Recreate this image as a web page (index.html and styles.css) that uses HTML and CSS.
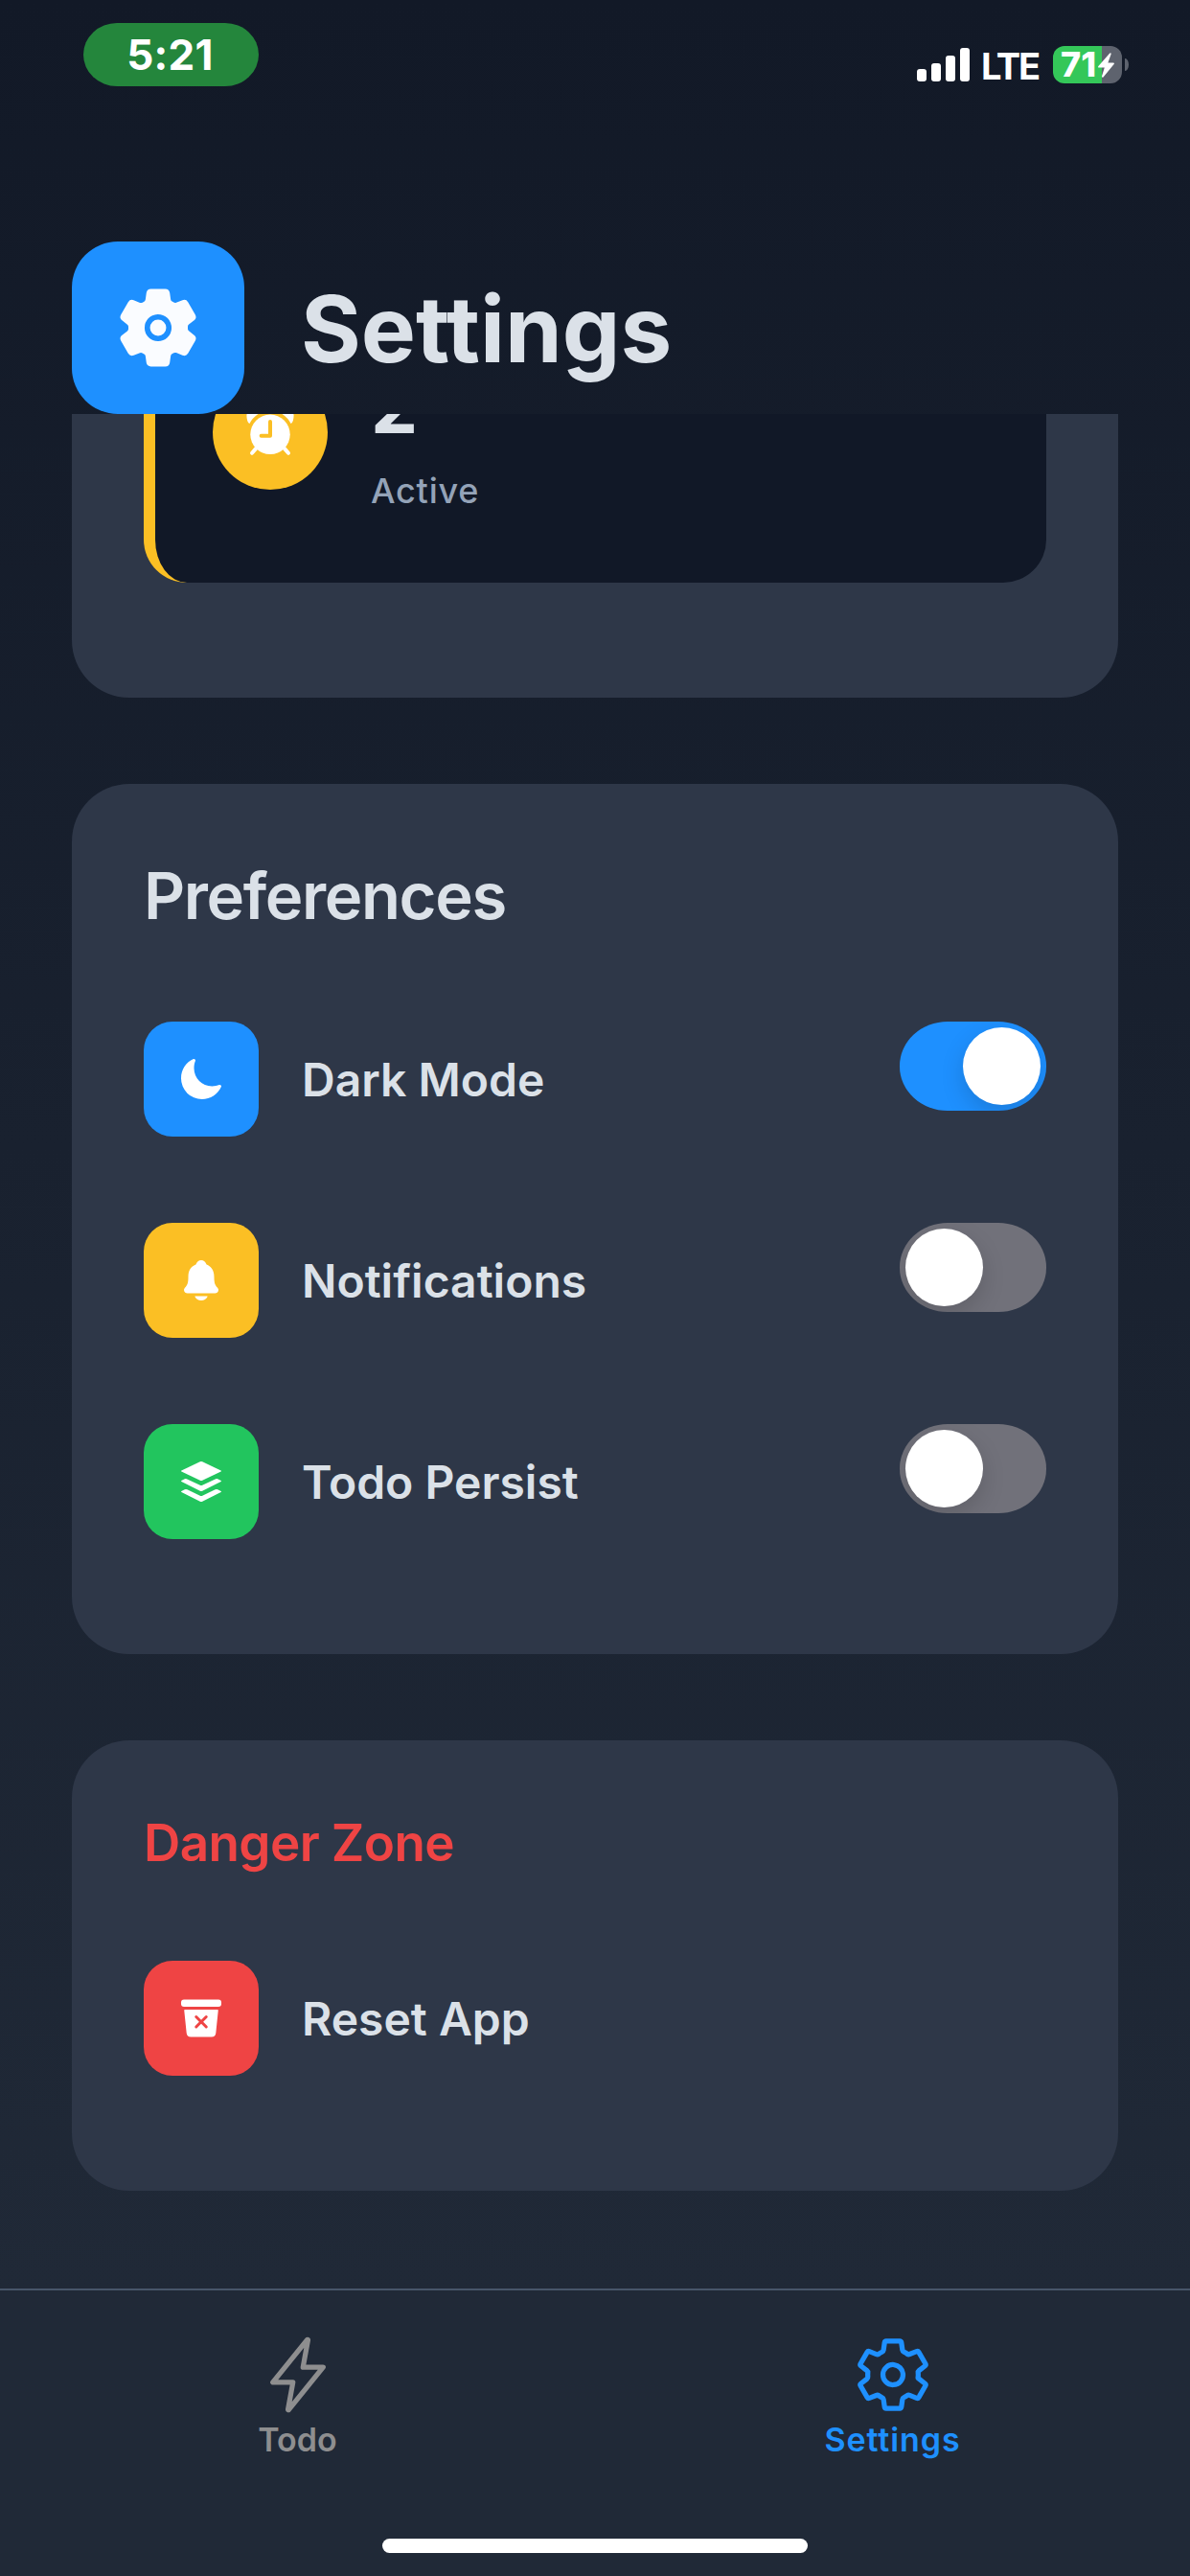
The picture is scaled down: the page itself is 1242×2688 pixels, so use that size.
FILE: index.html
```html
<!DOCTYPE html>
<html lang="en">
<head>
<meta charset="utf-8">
<title>Settings</title>
<link rel="stylesheet" href="styles.css">
</head>
<body>
<div class="screen">
  <div class="status-bar">
    <div class="time-pill">5:21</div>
    <div class="status-right">
      <svg class="signal" viewBox="0 0 55 35" fill="#fff"><rect x="0" y="22" width="10" height="13" rx="3"/><rect x="15" y="16" width="10" height="19" rx="3"/><rect x="30" y="8" width="10" height="27" rx="3"/><rect x="45" y="0" width="10" height="35" rx="3"/></svg>
      <span class="network">LTE</span>
      <div class="battery">
        <span class="level">71</span>
        <svg class="charge" viewBox="0 0 17 26" fill="#fff"><path d="M12.300.500.400 14q-1 1.500.800 1.500H6.800L4 24.500q0 1.800 1.500 1L16.600 12q1-1.500-.800-1.500H10.400L13.600 1.500Q13.800-.500 12.300.500z"/></svg>
      </div>
      <span class="battery-cap"></span>
    </div>
  </div>

  <header class="header">
    <div class="app-icon">
      <svg viewBox="0 0 512 512" fill="#fafcff"><circle cx="256" cy="256" r="48"/><path d="M470.39 300l-.47-.38-31.56-24.75a16.11 16.11 0 01-6.1-13.33v-11.56a16 16 0 016.11-13.22L469.92 212l.47-.38a26.68 26.68 0 005.9-34.06l-42.71-73.9a1.59 1.59 0 01-.13-.22A26.86 26.86 0 00401 92.14l-.35.13-37.1 14.93a15.94 15.94 0 01-14.47-1.29q-4.92-3.1-10-5.86a15.94 15.94 0 01-8.19-11.82l-5.59-39.59-.12-.72A27.22 27.22 0 00298.76 26h-85.52a26.92 26.92 0 00-26.45 22.39l-.09.56-5.57 39.67a16 16 0 01-8.13 11.82 175.21 175.21 0 00-10 5.82 15.92 15.92 0 01-14.43 1.27l-37.13-15-.35-.14a26.87 26.87 0 00-32.48 11.34l-.13.22-42.77 73.95a26.71 26.71 0 005.9 34.1l.47.38 31.56 24.75a16.11 16.11 0 016.1 13.33v11.56a16 16 0 01-6.11 13.22L42.08 300l-.47.38a26.68 26.68 0 00-5.9 34.06l42.71 73.9a1.59 1.59 0 01.13.22 26.86 26.86 0 0032.45 11.3l.35-.13 37.07-14.93a15.94 15.94 0 0114.47 1.29q4.92 3.11 10 5.86a15.94 15.94 0 018.19 11.82l5.56 39.59.12.72A27.22 27.22 0 00213.24 486h85.52a26.92 26.92 0 0026.45-22.39l.09-.56 5.57-39.67a16 16 0 018.18-11.82c3.42-1.84 6.76-3.79 10-5.82a15.92 15.92 0 0114.43-1.27l37.13 14.95.35.14a26.85 26.85 0 0032.48-11.34 2.53 2.53 0 01.13-.22l42.71-73.89a26.7 26.7 0 00-5.86-34.11zm-134.48-40.24a80 80 0 11-83.66-83.67 80.21 80.21 0 0183.66 83.67z"/></svg>
    </div>
    <h1>Settings</h1>
  </header>

  <main class="content">
    <section class="card stats-card">
      <div class="stat">
        <div class="stat-icon">
          <svg viewBox="0 0 512 512"><g fill="#fff"><path d="M46 100Q46 165 72 180Q95 130 152 92Q90 30 46 100z"/><path d="M466 100Q466 165 440 180Q417 130 360 92Q422 30 466 100z"/><circle cx="256" cy="276" r="177"/></g><path d="M130 400 94 442M382 400 418 442" stroke="#fff" stroke-width="34" stroke-linecap="round"/><path d="M256 162V288H176" fill="none" stroke="#fbbf24" stroke-width="34" stroke-linecap="round" stroke-linejoin="round"/></svg>
        </div>
        <div class="stat-text">
          <div class="stat-value">2</div>
          <div class="stat-label">Active</div>
        </div>
      </div>
    </section>

    <section class="card preferences">
      <h2>Preferences</h2>
      <div class="row">
        <div class="tile blue"><svg viewBox="0 0 512 512"><path d="M264 480A232 232 0 0132 248c0-94 54-178.28 137.61-214.67a16 16 0 0121.06 21.06C181.07 76.43 176 104.66 176 136c0 110.28 89.72 200 200 200 31.34 0 59.57-5.07 81.61-14.67a16 16 0 0121.06 21.06C442.28 426 358 480 264 480z"/></svg></div>
        <div class="label">Dark Mode</div>
        <div class="toggle on"><span class="knob"></span></div>
      </div>
      <div class="row">
        <div class="tile yellow"><svg viewBox="0 0 512 512"><path d="M440.08 341.31c-1.66-2-3.29-4-4.89-5.93-22-26.61-35.31-42.67-35.31-118 0-39-9.33-71-27.72-95-13.56-17.73-31.89-31.18-56.05-41.12a3 3 0 01-.82-.67C306.6 51.49 282.82 32 256 32s-50.59 19.49-59.28 48.56a3.13 3.13 0 01-.81.65c-56.38 23.21-83.78 67.74-83.78 136.14 0 75.36-13.29 91.42-35.31 118-1.6 1.93-3.23 3.89-4.89 5.93a35.16 35.16 0 00-4.65 37.62c6.17 13 19.32 21.07 34.33 21.07H410.5c14.94 0 28-8.06 34.19-21a35.17 35.17 0 00-4.61-37.66zM256 480a80.06 80.06 0 0070.44-42.13 4 4 0 00-3.54-5.87H189.12a4 4 0 00-3.55 5.87A80.06 80.06 0 00256 480z"/></svg></div>
        <div class="label">Notifications</div>
        <div class="toggle"><span class="knob"></span></div>
      </div>
      <div class="row">
        <div class="tile green"><svg viewBox="0 0 512 512"><path d="M243 35q13-6 26 0L476 132q9 6 0 12L269 243q-13 5-26 0L36 144q-9-6 0-12z"/><path d="M36 245 72 227q15-5 28 1L243 296q13 5 26 0L412 228q13-6 28-1L476 245q9 6 0 12L269 359q-13 6-26 0L36 257q-9-6 0-12z"/><path d="M36 362 72 344q15-5 28 1L243 413q13 5 26 0L412 345q13-6 28-1L476 362q9 6 0 12L269 476q-13 6-26 0L36 374q-9-6 0-12z"/></svg></div>
        <div class="label">Todo Persist</div>
        <div class="toggle"><span class="knob"></span></div>
      </div>
    </section>

    <section class="card danger">
      <h3>Danger Zone</h3>
      <div class="row">
        <div class="tile red"><svg viewBox="0 0 512 512"><rect x="32" y="48" width="448" height="80" rx="32"/><path d="M74.45 160a8 8 0 00-8 8.83l26.31 252.56a1.5 1.5 0 000 .22A48 48 0 00140.45 464h231.09a48 48 0 0047.67-42.39v-.21l26.27-252.57a8 8 0 00-8-8.83zm248.86 180.69a16 16 0 11-22.63 22.62L256 318.63l-44.69 44.68a16 16 0 01-22.63-22.62L233.37 296l-44.69-44.69a16 16 0 0122.63-22.62L256 273.37l44.68-44.68a16 16 0 0122.63 22.62L278.62 296z"/></svg></div>
        <div class="label">Reset App</div>
      </div>
    </section>
  </main>

  <nav class="tab-bar">
    <div class="tabs">
      <div class="tab">
        <svg viewBox="0 0 512 512"><path d="M315.27 33L96 304h128l-31.51 173.23a2.36 2.36 0 002.33 2.77 2.36 2.36 0 001.89-.95L416 208H288l31.66-173.25a2.45 2.45 0 00-2.44-2.75 2.42 2.42 0 00-1.95 1z"/></svg>
        <span>Todo</span>
      </div>
      <div class="tab active">
        <svg viewBox="0 0 512 512"><path d="M262.29 192.31a64 64 0 1057.4 57.4 64.13 64.13 0 00-57.4-57.4zM416.39 256a154.34 154.34 0 01-1.53 20.79l45.21 35.46a10.81 10.81 0 012.45 13.75l-42.77 74a10.81 10.81 0 01-13.14 4.59l-44.9-18.08a16.11 16.11 0 00-15.17 1.75A164.48 164.48 0 01325 400.8a15.94 15.94 0 00-8.82 12.14l-6.73 47.89a11.08 11.08 0 01-10.68 9.17h-85.54a11.11 11.11 0 01-10.69-8.87l-6.72-47.82a16.07 16.07 0 00-9-12.22 155.3 155.3 0 01-21.46-12.57 16 16 0 00-15.11-1.71l-44.89 18.07a10.81 10.81 0 01-13.14-4.58l-42.77-74a10.8 10.8 0 012.45-13.75l38.21-30a16.05 16.05 0 006-14.08c-.36-4.17-.58-8.33-.58-12.5s.21-8.27.58-12.35a16 16 0 00-6.07-13.94l-38.19-30A10.81 10.81 0 0149.48 186l42.77-74a10.81 10.81 0 0113.14-4.59l44.9 18.08a16.11 16.11 0 0015.17-1.75A164.48 164.48 0 01187 111.2a15.94 15.94 0 008.82-12.14l6.73-47.89A11.08 11.08 0 01213.23 42h85.54a11.11 11.11 0 0110.69 8.87l6.72 47.82a16.07 16.07 0 009 12.22 155.3 155.3 0 0121.46 12.57 16 16 0 0015.11 1.71l44.89-18.07a10.81 10.81 0 0113.14 4.58l42.77 74a10.8 10.8 0 01-2.45 13.75l-38.21 30a16.05 16.05 0 00-6.05 14.08c.33 4.14.55 8.3.55 12.47z"/></svg>
        <span>Settings</span>
      </div>
    </div>
    <div class="home-indicator"></div>
  </nav>
</div>
</body>
</html>
```
FILE: styles.css
```css
* { box-sizing: border-box; }

body {
  margin: 0;
  background: #111827;
  font-family: Inter, "Liberation Sans", sans-serif;
  color: #dbe1e8;
}

svg { display: block; flex: none; }

.screen {
  display: flex;
  flex-direction: column;
  width: 1242px;
  height: 2688px;
  overflow: hidden;
  background: linear-gradient(180deg, #121927 0, #202937 2388px);
}

/* Status bar */
.status-bar {
  display: flex;
  justify-content: space-between;
  align-items: flex-start;
  flex: none;
  height: 252px;
  padding: 24px 64px 0 87px;
}

.time-pill {
  width: 183px;
  height: 66px;
  padding-right: 2px;
  border-radius: 35px / 33px;
  background: #24863c;
  color: #fff;
  font-size: 44px;
  font-weight: 650;
  line-height: 66px;
  letter-spacing: 0.3px;
  text-align: center;
}

.status-right {
  display: flex;
  align-items: center;
  height: 39px;
  margin-top: 24px;
}

.signal { width: 55px; height: 35px; }

.network {
  width: 75px;
  margin: 3px 0 0 12px;
  color: #fff;
  font-size: 38px;
  font-weight: 700;
  line-height: 39px;
  letter-spacing: -2.2px;
}

.battery {
  display: flex;
  align-items: center;
  width: 72px;
  height: 39px;
  padding-left: 8px;
  border-radius: 12px;
  background: linear-gradient(90deg, #34c759 51px, #5e636e 51px);
  color: #fff;
}

.level {
  width: 39px;
  font-size: 36px;
  font-weight: 800;
  line-height: 39px;
}

.charge { width: 17px; height: 26px; }

.battery-cap {
  width: 4px;
  height: 13px;
  margin-left: 3px;
  border-radius: 0 4px 4px 0 / 0 7px 7px 0;
  background: #5e636e;
}

/* Header */
.header {
  display: flex;
  align-items: center;
  flex: none;
  height: 180px;
  padding: 0 75px;
  gap: 59px;
}

.app-icon {
  display: flex;
  align-items: center;
  justify-content: center;
  width: 180px;
  height: 180px;
  border-radius: 48px;
  background: #1e90ff;
}

.app-icon svg { width: 90px; height: 90px; }

h1, h2, h3 { margin: 0; }

h1 {
  padding-top: 2px;
  font-size: 96px;
  font-weight: 700;
  line-height: 116px;
}

/* Scrolled content */
.content {
  display: flex;
  flex-direction: column;
  flex: 1;
  gap: 90px;
  min-height: 0;
  padding: 0 75px;
  overflow: hidden;
}

.card {
  flex: none;
  padding: 75px;
  border-radius: 60px;
  background: #2e3748;
}

.stats-card {
  display: flex;
  align-items: flex-end;
  height: 296px;
  padding-bottom: 120px;
  border-radius: 0 0 60px 60px;
}

.stat {
  display: flex;
  align-items: center;
  flex: none;
  gap: 45px;
  width: 942px;
  height: 314px;
  padding: 0 60px;
  border-left: 12px solid #fbbf24;
  border-radius: 45px;
  background: #111827;
}

.stat-icon {
  display: flex;
  align-items: center;
  justify-content: center;
  width: 120px;
  height: 120px;
  border-radius: 50%;
  background: #fbbf24;
}

.stat-icon svg { width: 60px; height: 60px; }

.stat-text { padding-top: 14px; }

.stat-value {
  margin-bottom: 25px;
  font-size: 78px;
  font-weight: 700;
  line-height: 82px;
}

.stat-label {
  color: #94a3b8;
  font-size: 36px;
  font-weight: 500;
  line-height: 44px;
  letter-spacing: 0.8px;
}

.preferences { height: 908px; }
.danger { height: 470px; }

h2 {
  height: 173px;
  font-size: 67px;
  font-weight: 600;
  line-height: 83px;
  letter-spacing: -1.4px;
}

h3 {
  height: 155px;
  color: #ef4444;
  font-size: 53px;
  font-weight: 600;
  line-height: 65px;
  letter-spacing: -0.6px;
}

.row {
  display: flex;
  height: 120px;
  margin-bottom: 90px;
}

.tile {
  display: flex;
  align-items: center;
  justify-content: center;
  flex: none;
  width: 120px;
  height: 120px;
  border-radius: 30px;
  fill: #fff;
}

.tile svg { width: 48px; height: 48px; }
.blue { background: #1e90ff; }
.yellow { background: #fbbf24; }
.green { background: #22c55e; }
.red { background: #ef4444; }

.label {
  flex: 1;
  padding-left: 45px;
  font-size: 48px;
  font-weight: 560;
  line-height: 121px;
}

.toggle {
  display: flex;
  width: 153px;
  height: 93px;
  padding: 6px;
  border-radius: 50px / 46px;
  background: #71717a;
  overflow: hidden;
}

.toggle.on {
  justify-content: flex-end;
  background: #1e90ff;
}

.knob {
  width: 81px;
  height: 81px;
  border-radius: 50%;
  background: #fff;
  box-shadow: 0 9px 24px rgba(0, 0, 0, 0.15);
}

/* Tab bar */
.tab-bar {
  display: flex;
  flex-direction: column;
  align-items: center;
  flex: none;
  height: 300px;
  border-top: 2px solid #475569;
}

.tabs {
  display: flex;
  width: 100%;
  height: 259px;
}

.tab {
  display: flex;
  flex-direction: column;
  align-items: center;
  flex: 1;
  padding-top: 46px;
  color: #8e8e8f;
  font-size: 34px;
  font-weight: 560;
  line-height: 42px;
}

.tab.active {
  color: #1e90ff;
  letter-spacing: 0.9px;
}

.tab svg {
  width: 84px;
  height: 84px;
  margin-bottom: 5px;
  fill: none;
  stroke: currentColor;
  stroke-width: 32px;
  stroke-linecap: round;
  stroke-linejoin: round;
}

.home-indicator {
  width: 444px;
  height: 15px;
  border-radius: 8px;
  background: #fff;
}
```
